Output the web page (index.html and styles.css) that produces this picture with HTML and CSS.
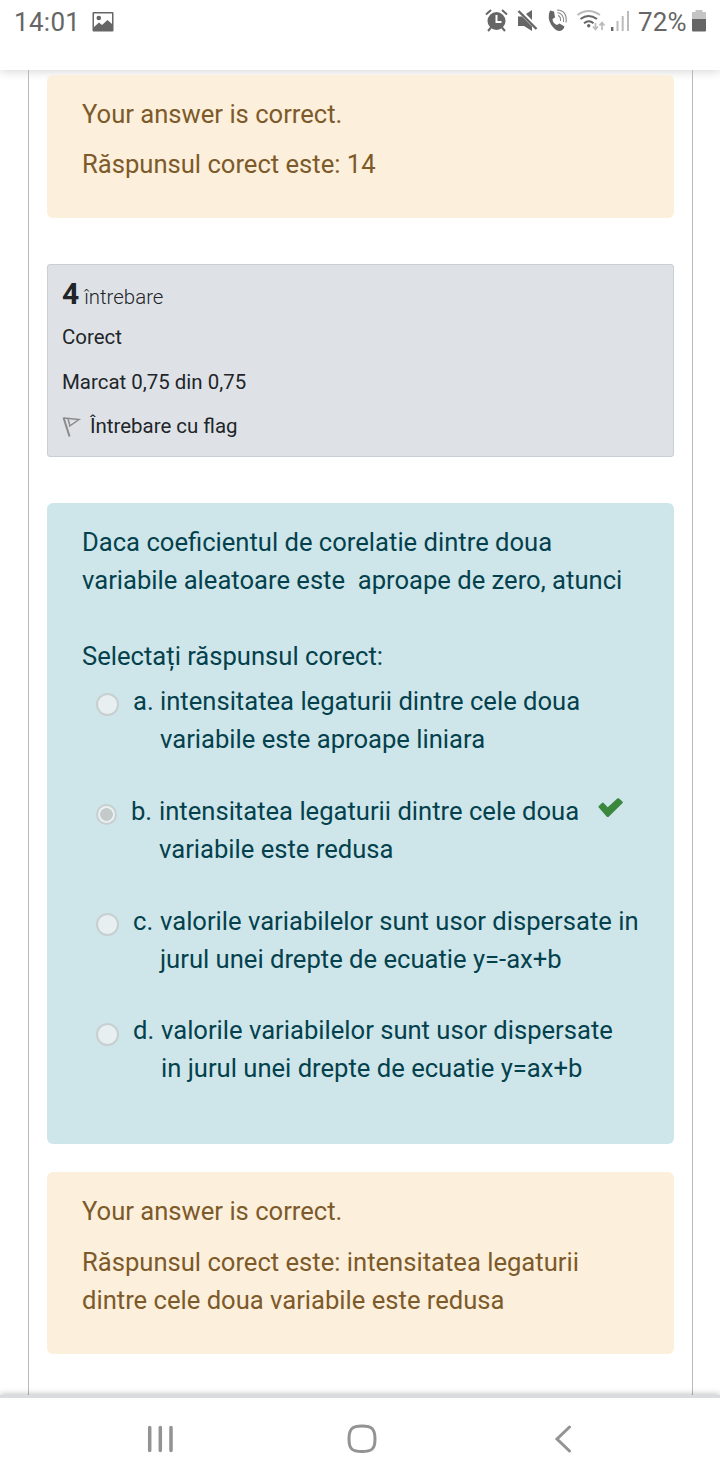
FILE: index.html
```html
<!DOCTYPE html>
<html lang="ro">
<head>
<meta charset="utf-8">
<title>Quiz</title>
<link rel="stylesheet" href="styles.css">
</head>
<body>
<header class="status">
  <span class="time">14:01</span>
  <svg class="pic" width="22" height="22" viewBox="0 0 22 22"><path fill="#666" fill-rule="evenodd" d="M1.500 1h19q1 0 1 1v17.500q0 1-1 1h-19q-1 0-1-1V2q0-1 1-1zM2 2.500V16l5-4.500 3 2.500 5.500-5L20 13V2.500z"/><circle cx="6.800" cy="7" r="2.300" fill="#666"/></svg>
  <svg class="icons" width="150" height="26" viewBox="484 8 150 26" fill="none" stroke-linecap="butt">
    <g stroke="#666" stroke-width="2"><circle cx="496.500" cy="21" r="9" fill="#666" stroke="none"/><path d="M486 14.500l5-4.500M502 10l5 4.500M491 27.500l-3 3.500M502 27.500l3 3.500"/><path stroke="#fff" d="M496.500 15v7h5"/></g>
    <path fill="#666" d="M518 16.500h4l10 10v4.500l-8-5h-6zM526 14l6-4v10z"/><path stroke="#fff" stroke-width="1.500" d="M520.500 10l17 17.500"/><path stroke="#666" stroke-width="2.400" d="M518.500 11l18 18"/>
    <path fill="#666" d="M550 10.500l4 1 1 6-2.500 1.500q0 4 4.500 6l2.500-1.500 5 3q-1.500 4.500-5.500 4.500-4-.500-8-6.500-4-7-1-14z"/><path stroke="#888" stroke-width="1.100" d="M558 15.500q3 1 2.500 5.500M557.500 12.500q7 1.500 6 9.500M557 10q10.500 .5 9 12.500"/>
    <path stroke="#bbb" stroke-width="2" d="M577.500 15q11-8 22.500 0"/><path stroke="#666" stroke-width="2" d="M580.500 19q8-6 16.500 0M584 23.300q5-4 9.500 0"/><circle cx="588.700" cy="25.800" r="1.700" fill="#666"/>
    <path stroke="#bbb" stroke-width="1.700" d="M595.500 23v6.500M593 26.500l2.500 3 2.500-3M602 30v-7M599.500 25.500l2.500-3 2.500 3"/>
    <path stroke="#666" stroke-width="2.400" d="M612.200 31v-4"/><path stroke="#bbb" stroke-width="2" d="M617.500 31V21M622.700 31V16M628 31V11"/>
  </svg>
  <span class="percent">72%</span>
  <svg class="battery" width="14" height="22" viewBox="0 0 14 22"><path fill="#c4c4c4" d="M3.500 0h7v2H14v8H0V2h3.500z"/><path fill="#666" d="M0 9h14v11.500q0 1-1 1H1q-1 0-1-1z"/></svg>
</header>
<main class="frame">
  <section class="feedback first">
    <p>Your answer is correct.</p>
    <p>Răspunsul corect este: 14</p>
  </section>
  <section class="info">
    <h3><b>4</b> <span>întrebare</span></h3>
    <p>Corect</p>
    <p>Marcat 0,75 din 0,75</p>
    <p class="flag"><svg width="20" height="24" viewBox="0 0 20 24" fill="none" stroke="#8a8a8a"><path stroke-width="2" d="M1.500 2.500l6 19"/><path stroke-width="1.500" d="M2 3l15 1.500-10 7M6 4l2 7"/></svg>Întrebare cu flag</p>
  </section>
  <section class="question">
    <p>Daca coeficientul de corelatie dintre doua<br>variabile aleatoare este&nbsp; aproape de zero, atunci</p>
    <p class="prompt">Selectați răspunsul corect:</p>
    <div class="option"><i class="radio"></i><span class="letter">a.</span><p>intensitatea legaturii dintre cele doua<br>variabile este aproape liniara</p></div>
    <div class="option picked"><i class="radio on"></i><span class="letter">b.</span><p>intensitatea legaturii dintre cele doua<br>variabile este redusa</p><svg class="check" width="26" height="21" viewBox="0 0 26 21"><path fill="#3b873e" d="M.8 9.500q-.8-.8 0-1.600L4 5q.9-.8 1.700 0l4 4.200L19.300.6q.9-.8 1.800 0l3.300 3q.8.9 0 1.700L10.700 18.700q-1 .8-1.900 0z"/></svg></div>
    <div class="option"><i class="radio"></i><span class="letter">c.</span><p>valorile variabilelor sunt usor dispersate in<br>jurul unei drepte de ecuatie y=-ax+b</p></div>
    <div class="option last"><i class="radio"></i><span class="letter">d.</span><p>valorile variabilelor sunt usor dispersate<br>in jurul unei drepte de ecuatie y=ax+b</p></div>
  </section>
  <section class="feedback second">
    <p>Your answer is correct.</p>
    <p>Răspunsul corect este: intensitatea legaturii<br>dintre cele doua variabile este redusa</p>
  </section>
</main>
<nav class="nav">
  <svg width="28" height="28" viewBox="0 0 28 28" stroke="#939393" stroke-width="3.500" stroke-linecap="round"><path d="M3.700 2.500v23M14.300 2.500v23M25 2.500v23"/></svg>
  <svg class="home" width="30" height="30" viewBox="0 0 30 30" fill="none" stroke="#939393" stroke-width="3"><path d="M15 2c10 0 13 3 13 13s-3 12.500-13 12.500S2 25 2 15 5 2 15 2z"/></svg>
  <svg width="18" height="28" viewBox="0 0 18 28" fill="none" stroke="#939393" stroke-width="3" stroke-linecap="round"><path d="M15.500 2L3 14l12.500 12"/></svg>
</nav>
</body>
</html>
```
FILE: styles.css
```css
* { box-sizing: border-box; }
body { margin: 0; width: 720px; height: 1480px; overflow: hidden; display: flex; flex-direction: column; background: #fff; font-family: Roboto, sans-serif; font-size: 25.6px; line-height: 38px; }
p, h3 { margin: 0; white-space: nowrap; }
.status { height: 70px; flex: none; display: flex; align-items: flex-start; color: #666; padding: 3px 14px 0; box-shadow: 0 1px 10px rgba(0,0,0,.18); background: #fff; font-size: 26px; }
.time { width: 78px; letter-spacing: .3px; }
.pic { margin-top: 8px; }
.icons { margin: 5px 4px 0 370px; flex: none; }
.percent { width: 54px; flex: none; letter-spacing: .2px; }
.battery { flex: none; margin-top: 7px; }
.frame { flex: none; width: 665px; height: 1325px; margin-left: 28px; border: 1px solid #b9babb; border-width: 0 1px; padding: 5px 18px 0; }
.feedback { background: #fcefdc; color: #7d5a29; border-radius: 6px; padding: 20px 35px 35px; }
.feedback.first { height: 143px; }
.feedback p + p { margin-top: 12px; }
.feedback.second p + p { margin-top: 13px; }
.info { margin-top: 46px; height: 193px; border: 1px solid #cacfd5; border-radius: 3px; background: #dee2e6; color: #212529; padding: 10px 14px; font-size: 20.45px; line-height: 30px; }
.info h3 { font-size: 20.45px; line-height: 38px; font-weight: 300; }
.info h3 b { font-size: 30px; font-weight: 700; }
.info p { margin-top: 6px; }
.info p + p { margin-top: 15px; }
.info .flag { display: flex; margin-top: 14px; }
.flag svg { margin: 4px 8px 0 0; }
.question { margin-top: 46px; height: 641px; background: #cee6ea; border-radius: 6px; color: #04414d; padding: 20px 35px; }
.prompt { margin: 38px 0 7px; }
.option { display: flex; height: 110px; padding-left: 14px; }
.radio { width: 23px; height: 23px; border: 2px solid #c8cfd1; border-radius: 50%; background: #e7eff1; margin-top: 11px; flex: none; }
.letter { margin-left: 14px; width: 27px; flex: none; }
.on { width: 21px; height: 21px; margin-top: 12px; background: radial-gradient(circle, #c4caca 6px, #e9f0f2 6.700px); }
.picked .letter { width: 28px; }
.check { margin: 6px 0 0 19px; flex: none; }
.last { margin-top: -1px; }
.last .radio { margin-top: 12px; }
.last .letter { width: 28px; }
.second { margin-top: 28px; height: 182px; }
.nav { flex: none; height: 85px; position: relative; background: #fff; border-top: 3px solid #dadbdf; box-shadow: 0 -1px 6px rgba(0,0,0,.25); display: flex; align-items: center; padding: 0 148px 0 146px; justify-content: space-between; }
.home { margin-right: 5px; }
```
